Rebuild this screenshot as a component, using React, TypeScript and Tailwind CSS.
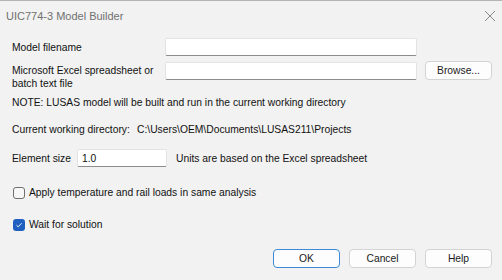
import React from "react"

function Field({ className = "", value = "" }: { className?: string; value?: string }) {
  return (
    <div
      className={`h-[18px] bg-white border border-[#e3e3e3] border-b-[#8c8c8c] rounded-[2px] flex items-center px-[4px] ${className}`}
    >
      {value}
    </div>
  )
}

function Button({ label, primary = false, className = "" }: { label: string; primary?: boolean; className?: string }) {
  return (
    <div
      className={`h-[19px] w-[67px] rounded-[4px] bg-[#fdfdfd] border flex items-center justify-center text-[#1a1a1a] ${
        primary ? "border-[#3f8ad6]" : "border-[#d3d3d3]"
      } ${className}`}
    >
      {label}
    </div>
  )
}

function Check({ checked, label }: { checked: boolean; label: string }) {
  return (
    <div className="flex items-center h-[13px]">
      {checked ? (
        <div className="w-[12px] h-[12px] ml-[13px] rounded-[3px] bg-[#1f5fbf] flex items-center justify-center">
          <svg width="8" height="8" viewBox="0 0 8 8">
            <path d="M1.5 4.2 L3.2 5.8 L6.6 2.2" fill="none" stroke="white" strokeWidth="0.9" />
          </svg>
        </div>
      ) : (
        <div className="w-[12px] h-[12px] ml-[13px] rounded-[3px] border border-[#6f6f6f] bg-[#f7f7f7]" />
      )}
      <span className="ml-[4px]">{label}</span>
    </div>
  )
}

export default function App() {
  return (
    <div
      className="w-[502px] h-[280px] bg-[#f2f2f2] border-t border-[#b4b4b4] text-[10.3px] leading-[13px] text-[#111] overflow-hidden flex flex-col whitespace-nowrap"
      style={{ fontFamily: '"Liberation Sans", Arial, sans-serif' }}
    >
      {/* Title bar */}
      <div className="h-[30px] flex items-center justify-between pl-[6px] pr-[6px]">
        <span className="text-[#707070] text-[11px]">UIC774-3 Model Builder</span>
        <svg width="12" height="12" viewBox="0 0 12 12">
          <path d="M1 1 L11 11 M11 1 L1 11" stroke="#8a8a8a" strokeWidth="1" />
        </svg>
      </div>

      {/* Body */}
      <div className="flex flex-col pl-[12px] pr-[10px]">
        <div className="flex items-center mt-[7px]">
          <span className="w-[153px]">Model filename</span>
          <Field className="w-[252px]" />
        </div>

        <div className="flex items-start mt-[6px]">
          <span className="w-[153px] pt-[2px]">
            Microsoft Excel spreadsheet or
            <br />
            batch text file
          </span>
          <Field className="w-[252px]" />
          <Button label="Browse..." className="ml-[8px] -mt-[1px]" />
        </div>

        <div className="mt-[6px]">NOTE: LUSAS model will be built and run in the current working directory</div>

        <div className="mt-[14px] flex">
          <span className="w-[125px]">Current working directory:</span>
          <span>C:\Users\OEM\Documents\LUSAS211\Projects</span>
        </div>

        <div className="flex items-center mt-[13px]">
          <span className="w-[65px]">Element size</span>
          <Field className="w-[90px]" value="1.0" />
          <span className="ml-[9px]">Units are based on the Excel spreadsheet</span>
        </div>
      </div>

      <div className="mt-[19px]">
        <Check checked={false} label="Apply temperature and rail loads in same analysis" />
      </div>
      <div className="mt-[19px]">
        <Check checked={true} label="Wait for solution" />
      </div>

      <div className="flex justify-end gap-[9px] pr-[10px] mt-[18px]">
        <Button label="OK" primary />
        <Button label="Cancel" />
        <Button label="Help" />
      </div>
    </div>
  )
}
